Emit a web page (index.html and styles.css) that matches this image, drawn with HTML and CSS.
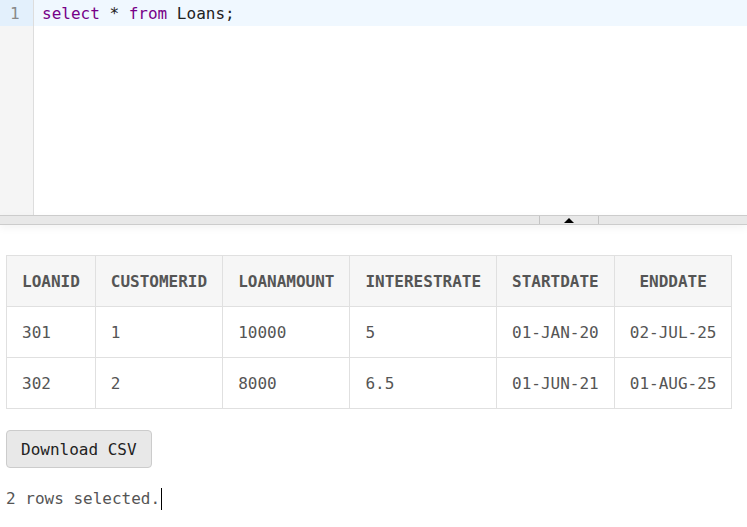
FILE: index.html
```html
<!DOCTYPE html>
<html>
<head>
<meta charset="utf-8">
<link rel="stylesheet" href="styles.css">
</head>
<body>
<div class="editor">
  <div class="gutter">
    <div class="ln active">1</div>
  </div>
  <div class="code">
    <div class="line active"><span class="kw">select</span> * <span class="kw">from</span> Loans;</div>
  </div>
</div>
<div class="splitter"><div class="handle"><span class="tri"></span></div></div>
<div class="results">
  <table class="grid">
    <thead>
      <tr><th>LOANID</th><th>CUSTOMERID</th><th>LOANAMOUNT</th><th>INTERESTRATE</th><th>STARTDATE</th><th>ENDDATE</th></tr>
    </thead>
    <tbody>
      <tr><td>301</td><td>1</td><td>10000</td><td>5</td><td>01-JAN-20</td><td>02-JUL-25</td></tr>
      <tr><td>302</td><td>2</td><td>8000</td><td>6.5</td><td>01-JUN-21</td><td>01-AUG-25</td></tr>
    </tbody>
  </table>
  <button class="btn">Download CSV</button>
  <div class="status">2 rows selected.<span class="caret"></span></div>
</div>
</body>
</html>
```
FILE: styles.css
```css
html, body {
  margin: 0;
  padding: 0;
  background: #fff;
  font-family: "DejaVu Sans Mono", "Liberation Mono", monospace;
  font-size: 16px;
}
.editor {
  display: flex;
  height: 215px;
  background: #fff;
}
.gutter {
  width: 33px;
  background: #f5f5f5;
  border-right: 1px solid #dddddd;
  flex: none;
}
.ln {
  height: 26px;
  line-height: 28px;
  color: #888;
  text-align: left;
  padding-left: 10px;
}
.ln.active {
  background: #e3f0fc;
}
.code {
  flex: 1;
}
.line {
  height: 26px;
  line-height: 28px;
  padding-left: 8px;
  color: #222;
}
.line.active {
  background: #f0f8ff;
}
.kw {
  color: #770088;
}
.splitter {
  height: 8px;
  background: #e8e8e8;
  border-top: 1px solid #cccccc;
  border-bottom: 1px solid #cccccc;
  position: relative;
  box-shadow: 0 3px 8px rgba(0,0,0,0.05);
}
.handle {
  position: absolute;
  left: 539px;
  top: 0;
  width: 58px;
  height: 8px;
  border-left: 1px solid #c4c4c4;
  border-right: 1px solid #c4c4c4;
  display: flex;
  align-items: center;
  justify-content: center;
}
.tri {
  width: 0;
  height: 0;
  border-left: 5px solid transparent;
  border-right: 5px solid transparent;
  border-bottom: 5px solid #000;
}
.results {
  padding: 30px 6px 0;
}
.grid {
  border-collapse: collapse;
  color: #555;
}
.grid th, .grid td {
  border: 1px solid #e0e0e0;
  padding: 15px 15px 15px 15px;
  line-height: 20px;
  white-space: nowrap;
}
.grid th {
  background: #f6f6f6;
  font-weight: bold;
  text-align: center;
  color: #555;
  padding-top: 16px;
  padding-bottom: 14px;
}
.grid td {
  text-align: left;
  padding-top: 16px;
  padding-bottom: 14px;
}
.btn {
  display: block;
  margin-top: 21px;
  height: 38px;
  padding: 0 14px;
  font-family: "DejaVu Sans Mono", "Liberation Mono", monospace;
  font-size: 16px;
  color: #222;
  background: #e8e8e8;
  border: 1px solid #cccccc;
  border-radius: 4px;
}
.status {
  margin-top: 20px;
  color: #555;
  line-height: 20px;
  display: flex;
  align-items: center;
}
.caret {
  display: inline-block;
  width: 1px;
  height: 22px;
  background: #000;
  margin-left: 1px;
}
```
